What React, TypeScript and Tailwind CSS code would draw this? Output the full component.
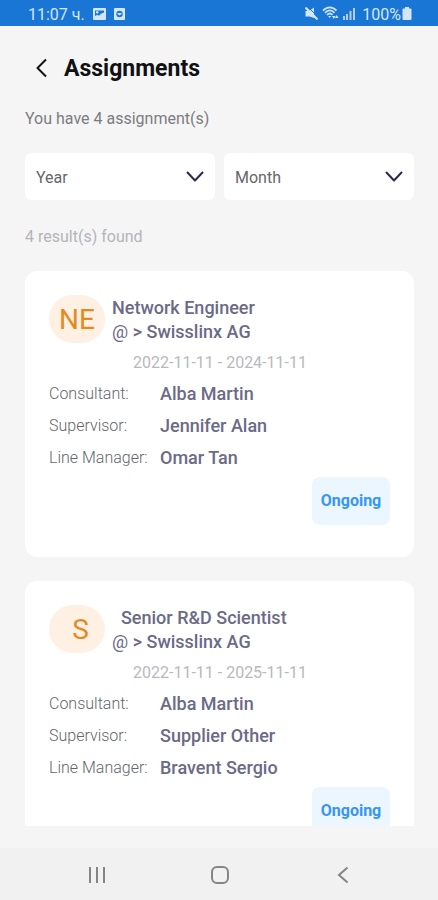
import { useState } from "react";

type Assignment = {
  id: number;
  initials: string;
  title: string;
  company: string;
  period: string;
  consultant: string;
  supervisor: string;
  lineManager: string;
  status: string;
};

const assignments: Assignment[] = [
  {
    id: 1,
    initials: "NE",
    title: "Network Engineer",
    company: "Swisslinx AG",
    period: "2022-11-11 - 2024-11-11",
    consultant: "Alba Martin",
    supervisor: "Jennifer Alan",
    lineManager: "Omar Tan",
    status: "Ongoing",
  },
  {
    id: 2,
    initials: " S",
    title: "  Senior R&D Scientist",
    company: "Swisslinx AG",
    period: "2022-11-11 - 2025-11-11",
    consultant: "Alba Martin",
    supervisor: "Supplier Other",
    lineManager: "Bravent Sergio",
    status: "Ongoing",
  },
];

function StatusBar() {
  return (
    <div className="flex h-[26px] shrink-0 items-center justify-between bg-[#1976d5] pt-1 pr-[26px] pl-7 text-[#d3e6fa]">
      <div className="flex items-center gap-2">
        <span className="text-base leading-5">11:07 ч.</span>
        <svg width="13" height="12" viewBox="0 0 13 12" className="-mt-0.5" aria-hidden="true">
          <rect width="13" height="12" rx="1" fill="currentColor" />
          <path d="M2 2.500h9v2L8 5.700l-2 2-1.500-1L2 8z" fill="#1976d5" />
          <circle cx="4.200" cy="4.200" r="1.200" fill="currentColor" />
        </svg>
        <svg width="11" height="12" viewBox="0 0 11 12" className="-mt-0.5" aria-hidden="true">
          <rect width="11" height="12" rx="1" fill="currentColor" />
          <circle cx="5.500" cy="6" r="3.200" fill="#1976d5" />
          <path d="M3.500 5h4v1L5.500 7.500 3.500 6z" fill="currentColor" />
        </svg>
      </div>
      <div className="flex items-center">
        <svg width="13" height="13" viewBox="0 0 13 13" className="-mt-1 mr-1" aria-hidden="true">
          <path d="M.5 4h3.500L9 .500V11L4.500 9.500H.5z" fill="currentColor" />
          <path d="M3 0l10 10" stroke="#1976d5" strokeWidth="1" />
          <path d="M1.200 1.200l10.600 10.600" stroke="currentColor" strokeWidth="2.200" strokeLinecap="round" />
        </svg>
        <svg width="17" height="14" viewBox="0 0 17 14" className="-mt-1 mr-1" fill="none" stroke="currentColor" aria-hidden="true">
          <path d="M1 4.600c4-4.400 9.500-4.400 13.500 0M3 6.800c3-3.200 6.500-3.200 9.500 0M5 8.900c1.800-1.800 3.700-1.800 5.500 0" strokeWidth="1.700" />
          <path d="M6.200 10h3L7.700 12z" fill="currentColor" stroke="none" />
          <path d="M10 10h3.500l-1.700 3zM13 12l1.700-3 1.800 3z" fill="currentColor" stroke="none" />
        </svg>
        <svg width="13" height="13" viewBox="0 0 13 13" className="-mt-1 mr-[6px]" fill="currentColor" aria-hidden="true">
          <rect x="0" y="9" width="2" height="4" opacity=".8" />
          <rect x="3" y="7" width="2" height="6" opacity=".8" />
          <rect x="6.500" y="4" width="2" height="9" opacity=".8" />
          <rect x="10" y="1" width="2" height="12" opacity=".8" />
        </svg>
        <span className="text-base leading-5">100%</span>
        <svg width="10" height="13" viewBox="0 0 10 13" className="-mt-1 ml-px" fill="currentColor" aria-hidden="true">
          <path d="M3 0h4v1.500h1.500a1 1 0 011 1V12a1 1 0 01-1 1h-7a1 1 0 01-1-1V2.500a1 1 0 011-1H3z" />
        </svg>
      </div>
    </div>
  );
}

function FilterSelect({ label, options }: { label: string; options: string[] }) {
  const [value, setValue] = useState("");

  return (
    <div className="grid flex-1 items-center rounded-md bg-white">
      <select
        aria-label={label}
        value={value}
        onChange={(e) => setValue(e.target.value)}
        className="col-start-1 row-start-1 h-[47px] w-full appearance-none bg-transparent pt-0.5 pr-10 pl-[11px] text-base text-[#66666c] outline-none"
      >
        <option value="">{label}</option>
        {options.map((o) => (
          <option key={o} value={o}>{o}</option>
        ))}
      </select>
      <svg
        width="18"
        height="11"
        viewBox="0 0 18 11"
        className="pointer-events-none col-start-1 row-start-1 mr-[11px] justify-self-end"
        fill="none"
        stroke="#2a2850"
        strokeWidth="2"
        strokeLinecap="round"
        strokeLinejoin="round"
        aria-hidden="true"
      >
        <path d="M1.500 1.500L9 9.500l7.500-8" />
      </svg>
    </div>
  );
}

function AssignmentCard({ item }: { item: Assignment }) {
  const people = [
    { label: "Consultant:", name: item.consultant },
    { label: "Supervisor:", name: item.supervisor },
    { label: "Line Manager:", name: item.lineManager },
  ];

  return (
    <article className="shrink-0 rounded-xl bg-white px-6 pt-6 pb-8">
      <div className="flex items-start gap-[7px]">
        <div className="flex h-12 w-14 items-center justify-center rounded-3xl bg-[#fff0e4] pt-0.5 text-[28px] leading-8 whitespace-pre text-[#e58a1f]">
          {item.initials}
        </div>
        <div className="pt-px text-lg leading-6 font-medium text-[#6b6a87]">
          <h2 className="whitespace-pre">{item.title}</h2>
          <p>
            <span className="font-normal">@</span> &gt; {item.company}
          </p>
        </div>
      </div>
      <p className="mt-[7px] ml-[84px] text-base leading-6 text-[#b9b9bd]">{item.period}</p>
      <dl className="mt-[3px]">
        {people.map((p) => (
          <div key={p.label} className="flex h-8 items-center">
            <dt className="w-[111px] shrink-0 text-base font-light text-[#66666a]">{p.label}</dt>
            <dd className="text-lg font-medium text-[#6b6a87]">{p.name}</dd>
          </div>
        ))}
      </dl>
      <div className="mt-[3px] flex justify-end">
        <span className="flex h-12 w-[78px] items-center justify-center rounded-lg bg-[#ecf6ff] text-base font-bold text-[#3795f5]">
          {item.status}
        </span>
      </div>
    </article>
  );
}

function NavBar() {
  return (
    <nav className="flex h-[52px] shrink-0 items-center justify-around bg-[#f1f1f1] pt-0.5 pr-[33px] pl-[35px] text-[#858585]">
      <button aria-label="Recent apps" className="flex size-10 items-center justify-center">
        <svg width="18" height="18" viewBox="0 0 18 18" fill="none" stroke="currentColor" strokeWidth="2">
          <path d="M2 1v16M9 1v16M16 1v16" />
        </svg>
      </button>
      <button aria-label="Home" className="flex size-10 items-center justify-center">
        <svg width="18" height="18" viewBox="0 0 18 18" fill="none" stroke="currentColor" strokeWidth="2">
          <rect x="1" y="1" width="16" height="16" rx="5" />
        </svg>
      </button>
      <button aria-label="Back" className="flex size-10 items-center justify-center">
        <svg width="12" height="18" viewBox="0 0 12 18" fill="none" stroke="currentColor" strokeWidth="2">
          <path d="M10.500 1.500L2 9l8.500 7.500" />
        </svg>
      </button>
    </nav>
  );
}

export default function App() {
  return (
    <div className="flex h-screen flex-col bg-[#f5f5f5] font-[Roboto,sans-serif]">
      <StatusBar />
      <main className="flex min-h-0 flex-1 flex-col pr-6 pb-[22px] pl-[25px]">
        <header className="mt-[26px] flex h-8 items-center gap-4 pl-[9px]">
          <button aria-label="Go back" className="flex h-8 w-[14px] items-center justify-center">
            <svg width="12" height="20" viewBox="0 0 12 20" fill="none" stroke="#111" strokeWidth="2" strokeLinejoin="round">
              <path d="M11 1.500L2.500 10l8.500 8.500" />
            </svg>
          </button>
          <h1 className="pt-0.5 text-[23px] leading-8 font-bold text-[#111114]">Assignments</h1>
        </header>
        <p className="mt-[23px] text-base leading-6 text-[#7c7c80]">You have 4 assignment(s)</p>
        <div className="mt-[22px] flex gap-[9px]">
          <FilterSelect label="Year" options={["2022", "2023", "2024", "2025"]} />
          <FilterSelect label="Month" options={["January", "February", "March", "April", "May", "June", "July", "August", "September", "October", "November", "December"]} />
        </div>
        <p className="mt-[25px] text-base leading-6 text-[#b4b4b8]">4 result(s) found</p>
        <section className="mt-[22px] flex min-h-0 flex-1 flex-col gap-6 overflow-hidden">
          {assignments.map((a) => (
            <AssignmentCard key={a.id} item={a} />
          ))}
        </section>
      </main>
      <NavBar />
    </div>
  );
}
